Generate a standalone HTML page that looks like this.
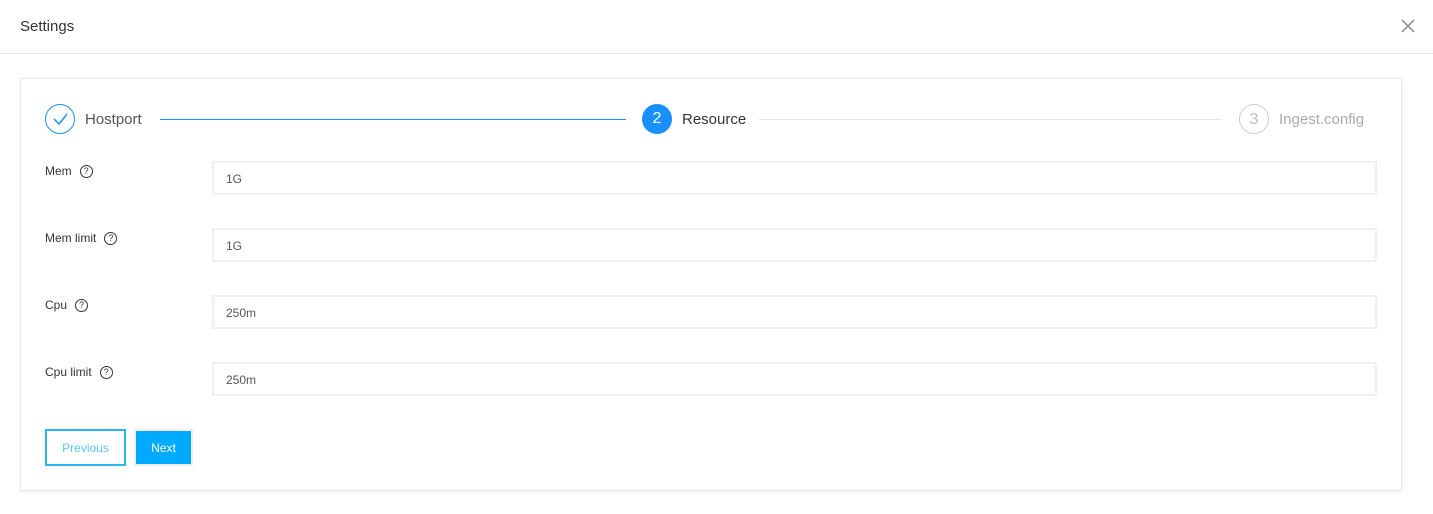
<!DOCTYPE html>
<html><head><style>
body{margin:0;width:1433px;height:514px;background:#fff;font-family:"Liberation Sans",sans-serif;position:relative;overflow:hidden;color:#333}
.abs{position:absolute}
.hdr{left:0;top:0;width:1433px;height:53px;border-bottom:1px solid #e8e8e8}
.card{left:20px;top:78px;width:1380px;height:411px;border:1px solid #e8e8e8;box-shadow:0 1px 3px rgba(0,0,0,.08)}
.circ{width:30px;height:30px;border-radius:50%;box-sizing:border-box;text-align:center;line-height:30px;font-size:16px}
.lbl{font-size:12px;color:#333}
.q{display:inline-block;width:11px;height:11px;border:1.3px solid #333;border-radius:50%;font-size:9px;line-height:11px;text-align:center;margin-left:8px;vertical-align:middle}
.inp{left:212px;width:1165px;height:34px;box-sizing:border-box;border:2px solid #eef0f4;font-size:12px;line-height:32px;padding-left:12px;color:#555}
</style></head><body>
<div class="abs hdr"></div>
<div class="abs" style="left:20px;top:18px;font-size:15px;color:#333">Settings</div>
<svg class="abs" style="left:1400px;top:18px" width="16" height="16"><path d="M2 2L14 14M14 2L2 14" stroke="#888" stroke-width="1.5"/></svg>
<div class="abs card"></div>
<div class="abs circ" style="left:45px;top:104px;border:1.5px solid #1890ff"></div>
<svg class="abs" style="left:52px;top:111px" width="17" height="17"><path d="M2 8L7 13L15 3" stroke="#1890ff" stroke-width="1.5" fill="none"/></svg>
<div class="abs" style="left:85px;top:111px;font-size:15px;color:#555">Hostport</div>
<div class="abs" style="left:160px;top:119px;width:466px;height:1px;background:#1890ff"></div>
<div class="abs circ" style="left:642px;top:104px;background:#1890ff;color:#fff">2</div>
<div class="abs" style="left:682px;top:111px;font-size:15px;color:#333">Resource</div>
<div class="abs" style="left:759px;top:119px;width:463px;height:1px;background:#e8e8e8"></div>
<div class="abs circ" style="left:1239px;top:104px;border:1.5px solid #ccc;color:#bbb">3</div>
<div class="abs" style="left:1279px;top:111px;font-size:15px;color:#aaa">Ingest.config</div>

<div class="abs lbl" style="left:45px;top:164px">Mem<span class="q">?</span></div>
<div class="abs inp" style="top:161px">1G</div>
<div class="abs lbl" style="left:45px;top:231px">Mem limit<span class="q">?</span></div>
<div class="abs inp" style="top:228px">1G</div>
<div class="abs lbl" style="left:45px;top:298px">Cpu<span class="q">?</span></div>
<div class="abs inp" style="top:295px">250m</div>
<div class="abs lbl" style="left:45px;top:365px">Cpu limit<span class="q">?</span></div>
<div class="abs inp" style="top:362px">250m</div>

<div class="abs" style="left:45px;top:429px;width:81px;height:37px;box-sizing:border-box;border:2px solid #29b6f6;color:#5cc4f5;font-size:12px;text-align:center;line-height:35px">Previous</div>
<div class="abs" style="left:134px;top:429px;width:59px;height:37px;box-sizing:border-box;border:2px solid #eee;background:#00aaff;color:#fff;font-size:12px;text-align:center;line-height:35px">Next</div>
</body></html>
